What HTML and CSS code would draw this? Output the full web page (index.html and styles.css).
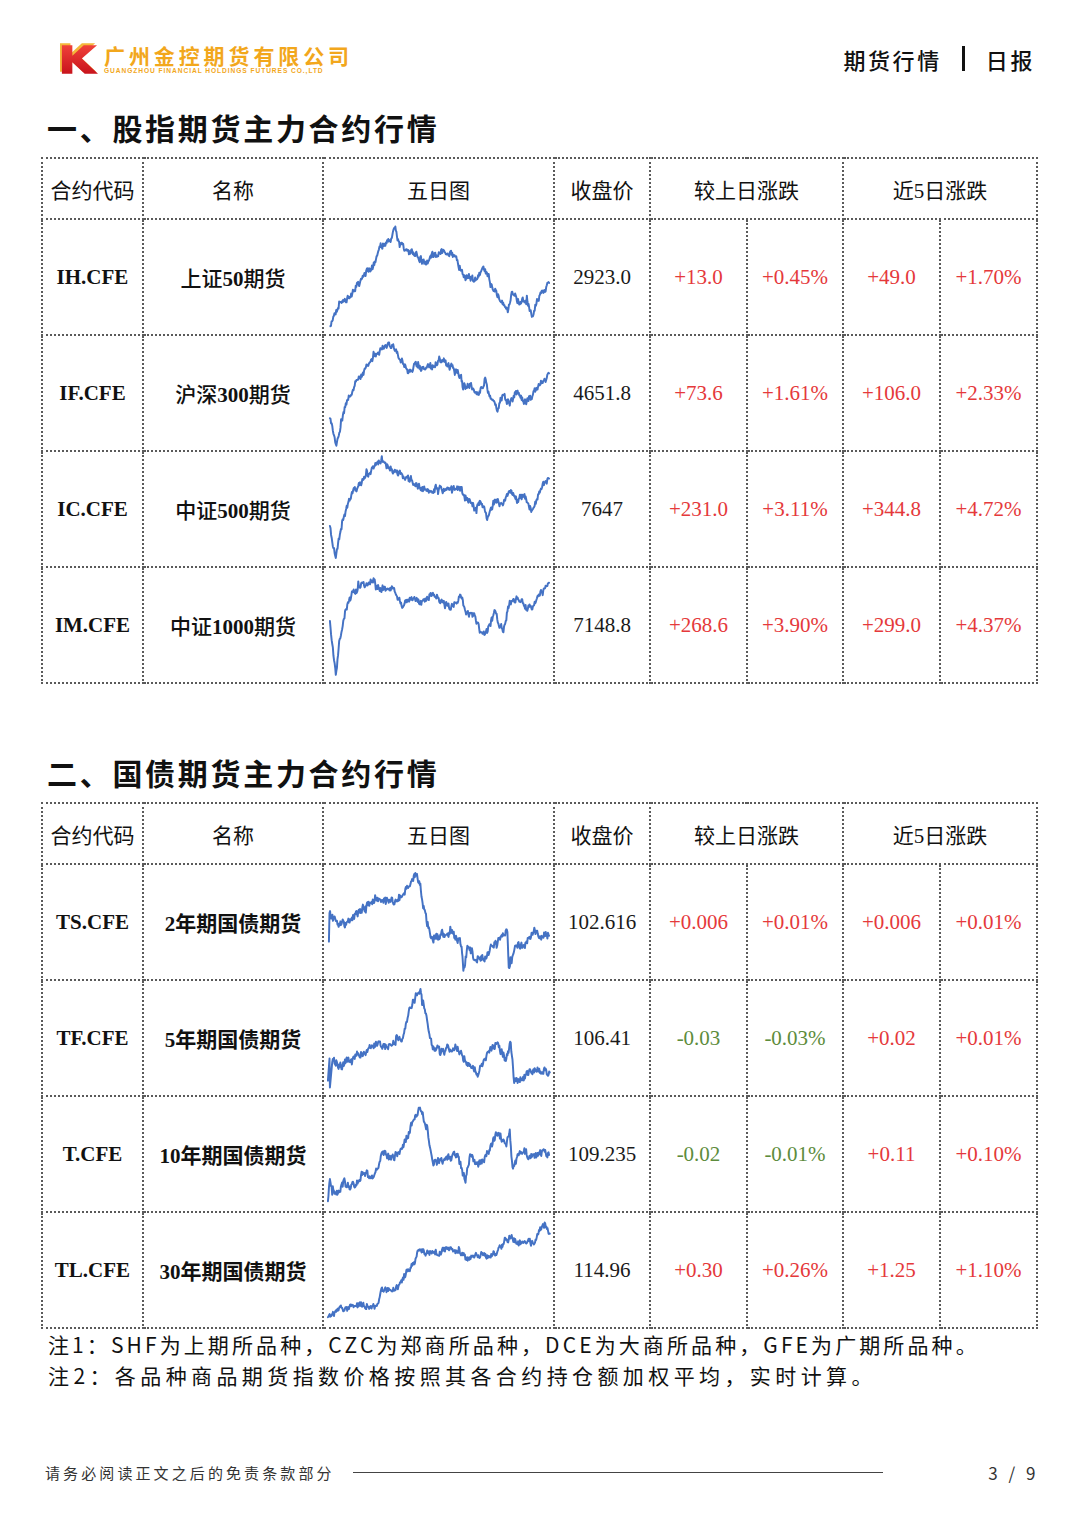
FILE: index.html
```html
<!DOCTYPE html>
<html lang="zh-CN">
<head>
<meta charset="utf-8">
<title>期货行情 日报</title>
<link rel="stylesheet" href="styles.css">
</head>
<body>
<div class="page">
  <header class="top">
    <div class="logo">
      <svg class="logo-k" viewBox="0 0 40 32" width="38" height="31">
        <defs>
          <linearGradient id="kred" x1="0" y1="0" x2="0" y2="1">
            <stop offset="0" stop-color="#f0413a"/>
            <stop offset="1" stop-color="#c8141c"/>
          </linearGradient>
        </defs>
        <path d="M0,0 H11 V11 L23,0 H37 L21,14 L38,30 H24 L11,18 V30 H0 Z" fill="#f4b73a"/>
        <path d="M2,2 H13 V13 L25,2 H39 L23,16 L40,32 H26 L13,20 V32 H2 Z" fill="url(#kred)"/>
      </svg>
      <div class="logo-text">
        <div class="logo-cn">广州金控期货有限公司</div>
        <div class="logo-en">GUANGZHOU FINANCIAL HOLDINGS FUTURES CO.,LTD</div>
      </div>
    </div>
    <div class="doc-type">
      <span>期货行情</span><span class="bar"></span><span>日报</span>
    </div>
  </header>

  <h2 class="sec-title">一、股指期货主力合约行情</h2>
  <table class="quote">
    <colgroup>
      <col class="c1"><col class="c2"><col class="c3"><col class="c4"><col class="c5"><col class="c6"><col class="c7"><col class="c8">
    </colgroup>
    <thead>
      <tr><th>合约代码</th><th>名称</th><th>五日图</th><th>收盘价</th><th colspan="2">较上日涨跌</th><th colspan="2">近5日涨跌</th></tr>
    </thead>
    <tbody>
      <tr>
        <td class="code">IH.CFE</td>
        <td class="name">上证<b>50</b>期货</td>
        <td class="chart"><svg class="spark" viewBox="0 0 231 116" data-amp="2.4" data-seed="11" data-pts="[[5.5,108],[15,84],[26,78],[36.6,60],[49,48],[56,30],[65,24],[71,10],[76,28],[86.6,34],[101,44],[111.6,38],[120.5,31],[133,38],[140,54],[154,61],[163,51],[172,71],[186.6,91],[190,73],[197,83],[206,83],[211.6,96],[218.7,76],[228,64]]"><path/></svg></td>
        <td class="num">2923.0</td>
        <td class="num up">+13.0</td><td class="num up">+0.45%</td>
        <td class="num up">+49.0</td><td class="num up">+1.70%</td>
      </tr>
      <tr>
        <td class="code">IF.CFE</td>
        <td class="name">沪深<b>300</b>期货</td>
        <td class="chart"><svg class="spark" viewBox="0 0 231 116" data-amp="2.4" data-seed="23" data-pts="[[5,85],[11,108],[17,85],[23,65],[38,40],[50,22],[58,15],[70,12],[83,35],[93,30],[103,33],[118,25],[128,30],[138,40],[140,50],[148,50],[156,60],[163,43],[168,60],[175,77],[181,60],[188,70],[196,55],[203,65],[211,60],[218,50],[228,38]]"><path/></svg></td>
        <td class="num">4651.8</td>
        <td class="num up">+73.6</td><td class="num up">+1.61%</td>
        <td class="num up">+106.0</td><td class="num up">+2.33%</td>
      </tr>
      <tr>
        <td class="code">IC.CFE</td>
        <td class="name">中证<b>500</b>期货</td>
        <td class="chart"><svg class="spark" viewBox="0 0 231 116" data-amp="2.4" data-seed="37" data-pts="[[5,74],[11,108],[18,69],[28,44],[38,27],[50,14],[56,11],[68,17],[78,21],[88,29],[98,35],[108,39],[118,34],[128,39],[138,34],[143,44],[153,59],[158,49],[165,69],[173,49],[181,54],[188,39],[196,49],[203,42],[211,59],[218,39],[228,27]]"><path/></svg></td>
        <td class="num">7647</td>
        <td class="num up">+231.0</td><td class="num up">+3.11%</td>
        <td class="num up">+344.8</td><td class="num up">+4.72%</td>
      </tr>
      <tr>
        <td class="code">IM.CFE</td>
        <td class="name">中证<b>1000</b>期货</td>
        <td class="chart"><svg class="spark" viewBox="0 0 231 116" data-amp="2.4" data-seed="41" data-pts="[[5,53],[11,110],[15,73],[21,43],[28,23],[38,16],[50,12],[58,23],[68,18],[78,38],[88,28],[98,38],[108,28],[118,33],[128,43],[138,28],[143,43],[153,48],[158,63],[165,66],[173,45],[181,65],[188,33],[196,30],[203,38],[211,43],[218,28],[228,15]]"><path/></svg></td>
        <td class="num">7148.8</td>
        <td class="num up">+268.6</td><td class="num up">+3.90%</td>
        <td class="num up">+299.0</td><td class="num up">+4.37%</td>
      </tr>
    </tbody>
  </table>

  <h2 class="sec-title sec-two">二、国债期货主力合约行情</h2>
  <table class="quote">
    <colgroup>
      <col class="c1"><col class="c2"><col class="c3"><col class="c4"><col class="c5"><col class="c6"><col class="c7"><col class="c8">
    </colgroup>
    <thead>
      <tr><th>合约代码</th><th>名称</th><th>五日图</th><th>收盘价</th><th colspan="2">较上日涨跌</th><th colspan="2">近5日涨跌</th></tr>
    </thead>
    <tbody>
      <tr>
        <td class="code">TS.CFE</td>
        <td class="name bond">2年期国债期货</td>
        <td class="chart"><svg class="spark" viewBox="0 0 231 116" data-amp="2.8" data-seed="53" data-pts="[[4,79],[4.6,48],[11,58],[25,59],[35.6,46],[52.8,36],[66.6,36],[77,33],[87,19],[92.5,10],[97.6,26],[101,46],[108,76],[118,73],[128.7,68],[139,83],[140.8,108],[146,83],[153,99],[163,93],[173.5,76],[185.6,68],[187,104],[194,83],[204.6,79],[213,63],[221.8,71],[228,72]]"><path/></svg></td>
        <td class="num">102.616</td>
        <td class="num up">+0.006</td><td class="num up">+0.01%</td>
        <td class="num up">+0.006</td><td class="num up">+0.01%</td>
      </tr>
      <tr>
        <td class="code">TF.CFE</td>
        <td class="name bond">5年期国债期货</td>
        <td class="chart"><svg class="spark" viewBox="0 0 231 116" data-amp="2.8" data-seed="67" data-pts="[[3,100],[4.6,80],[5,108],[8,80],[15,87],[25,83],[39,73],[53,67],[66.6,62],[78.7,57],[87,27],[96.6,10],[101,27],[109.7,72],[122,70],[135.6,70],[144,87],[156,93],[166.6,73],[175,63],[184,80],[189,62],[192.5,102],[204.6,93],[218,90],[228.7,93]]"><path/></svg></td>
        <td class="num">106.41</td>
        <td class="num down">-0.03</td><td class="num down">-0.03%</td>
        <td class="num up">+0.02</td><td class="num up">+0.01%</td>
      </tr>
      <tr>
        <td class="code">T.CFE</td>
        <td class="name bond">10年期国债期货</td>
        <td class="chart"><svg class="spark" viewBox="0 0 231 116" data-amp="2.8" data-seed="79" data-pts="[[3,107],[5,84],[11.4,101],[18,91],[32,92],[39,77],[49,81],[58,57],[66.6,64],[78.7,54],[87,31],[96.6,11],[104.6,34],[109.7,67],[122,64],[135.6,62],[143,87],[147.6,57],[156,71],[166.6,57],[175,37],[184,47],[188,32],[190.8,71],[197.7,57],[211,61],[221.8,54],[228,59]]"><path/></svg></td>
        <td class="num">109.235</td>
        <td class="num down">-0.02</td><td class="num down">-0.01%</td>
        <td class="num up">+0.11</td><td class="num up">+0.10%</td>
      </tr>
      <tr>
        <td class="code">TL.CFE</td>
        <td class="name bond">30年期国债期货</td>
        <td class="chart"><svg class="spark" viewBox="0 0 231 116" data-amp="2.2" data-seed="97" data-pts="[[3,106],[11.4,101],[15,96],[32,96],[39,91],[51,95],[58,76],[66.6,78],[77,70],[84,61],[91,53],[96,40],[104.6,41],[115,43],[125,36],[135.6,40],[144,48],[156,43],[168,45],[176.6,35],[188.7,25],[197.7,31],[211.4,31],[216.6,21],[223.5,10],[228.7,21]]"><path/></svg></td>
        <td class="num">114.96</td>
        <td class="num up">+0.30</td><td class="num up">+0.26%</td>
        <td class="num up">+1.25</td><td class="num up">+1.10%</td>
      </tr>
    </tbody>
  </table>

  <div class="notes">
    <p class="note1">注1：SHF为上期所品种，CZC为郑商所品种，DCE为大商所品种，GFE为广期所品种。</p>
    <p class="note2">注2：各品种商品期货指数价格按照其各合约持仓额加权平均，实时计算。</p>
  </div>

  <footer class="footer">
    <span class="disclaimer">请务必阅读正文之后的免责条款部分</span>
    <span class="rule"></span>
    <span class="pageno">3 / 9</span>
  </footer>
</div>
<script src="script.js"></script>
</body>
</html>
```

FILE: styles.css
```css
html, body {
  margin: 0;
  padding: 0;
  background: #ffffff;
}
body {
  width: 1080px;
  font-family: "Liberation Serif", "Noto Sans CJK SC", serif;
  color: #111;
}
.page {
  width: 1080px;
  padding-top: 43px;
  box-sizing: border-box;
}

/* header */
.top {
  display: flex;
  justify-content: space-between;
  align-items: center;
  height: 31px;
  padding: 0 45px 0 60px;
}
.logo {
  display: flex;
  align-items: flex-start;
  height: 31px;
}
.logo-k {
  display: block;
  flex: none;
}
.logo-text {
  margin-left: 6px;
  margin-top: 1px;
}
.logo-cn {
  font-family: "Noto Sans CJK SC", sans-serif;
  font-weight: 700;
  font-size: 21px;
  line-height: 22px;
  letter-spacing: 3.9px;
  color: #f2a71c;
}
.logo-en {
  font-family: "Liberation Sans", "DejaVu Sans", sans-serif;
  font-weight: 700;
  font-size: 6.6px;
  line-height: 7px;
  letter-spacing: 0.95px;
  color: #f2a71c;
  margin-top: 1px;
  white-space: nowrap;
}
.doc-type {
  display: flex;
  align-items: center;
  font-family: "Noto Sans CJK SC", sans-serif;
  font-weight: 500;
  font-size: 22px;
  letter-spacing: 2.6px;
  color: #111;
}
.doc-type .bar {
  display: inline-block;
  width: 3px;
  height: 25px;
  background: #111;
  margin: 0 21px 0 20px;
}

/* section titles */
.sec-title {
  margin: 33px 0 10px 0;
  padding-left: 47px;
  font-family: "Noto Sans CJK SC", sans-serif;
  font-weight: 700;
  font-size: 30px;
  line-height: 40px;
  letter-spacing: 2.7px;
  color: #111;
}
.sec-title.sec-two {
  margin-top: 68px;
  margin-bottom: 10px;
}

/* tables */
.quote {
  margin-left: 41px;
  width: 995px;
  table-layout: fixed;
  border-collapse: collapse;
}
.quote col.c1 { width: 101px; }
.quote col.c2 { width: 180px; }
.quote col.c3 { width: 231px; }
.quote col.c4 { width: 96px; }
.quote col.c5 { width: 97px; }
.quote col.c6 { width: 96px; }
.quote col.c7 { width: 97px; }
.quote col.c8 { width: 97px; }
.quote th, .quote td {
  border: 2px dotted #5a5a5a;
  padding: 0;
  text-align: center;
  vertical-align: middle;
}
.quote thead tr { height: 61px; }
.quote tbody tr { height: 116px; }
.quote th {
  font-family: "Liberation Serif", "Noto Sans CJK SC", serif;
  font-weight: 400;
  font-size: 21px;
  color: #111;
}
.quote td.code {
  font-family: "Liberation Serif", serif;
  font-weight: 700;
  font-size: 21px;
}
.quote td.name {
  font-family: "Liberation Serif", "Noto Sans CJK SC", serif;
  font-weight: 500;
  font-size: 21px;
}
.quote td.name b { font-weight: 700; }
.quote td.name.bond { font-weight: 700; }
.quote td.num {
  font-family: "Liberation Serif", serif;
  font-size: 21px;
  color: #1a1a1a;
}
.quote td.num.up { color: #e5393b; }
.quote td.num.down { color: #5d8c3c; }
.quote td.chart { overflow: hidden; }
.spark {
  display: block;
  width: 229px;
  height: 114px;
  overflow: hidden;
}
.spark path {
  fill: none;
  stroke: #4472c4;
  stroke-width: 2;
  stroke-linejoin: round;
  stroke-linecap: round;
}

/* notes */
.notes {
  margin-top: 0;
  padding-left: 48px;
  font-family: "Noto Sans CJK SC", sans-serif;
  font-size: 21px;
  color: #111;
}
.notes p {
  margin: 0;
  line-height: 31px;
  white-space: nowrap;
}
.notes .note1 { letter-spacing: 3.1px; }
.notes .note2 { letter-spacing: 4.4px; }

/* footer */
.footer {
  display: flex;
  align-items: center;
  margin-top: 66px;
  height: 30px;
  padding: 0 44px 0 45px;
  font-family: "Noto Sans CJK SC", sans-serif;
  color: #333;
}
.disclaimer {
  font-size: 15px;
  letter-spacing: 3.1px;
  white-space: nowrap;
}
.rule {
  flex: none;
  width: 530px;
  height: 0;
  border-top: 1px solid #444;
  margin-left: 18px;
}
.pageno {
  margin-left: auto;
  font-size: 17px;
  letter-spacing: 3.5px;
  margin-right: -3px;
  white-space: pre;
}
```

FILE: script.js
```js
(function () {
  function rng(seed) {
    return function () {
      seed |= 0;
      seed = (seed + 0x6d2b79f5) | 0;
      var t = Math.imul(seed ^ (seed >>> 15), 1 | seed);
      t = (t + Math.imul(t ^ (t >>> 7), 61 | t)) ^ t;
      return ((t ^ (t >>> 14)) >>> 0) / 4294967296;
    };
  }
  var charts = document.querySelectorAll('svg.spark');
  for (var c = 0; c < charts.length; c++) {
    var svg = charts[c];
    var pts = JSON.parse(svg.getAttribute('data-pts'));
    var amp = parseFloat(svg.getAttribute('data-amp') || '2.5');
    var rand = rng(parseInt(svg.getAttribute('data-seed') || '7', 10));
    var fast = 0, slow = 0;
    var d = '';
    for (var k = 0; k < pts.length - 1; k++) {
      var a = pts[k], b = pts[k + 1];
      var dx = b[0] - a[0];
      var steps = Math.max(1, Math.ceil(Math.abs(dx) / 0.6));
      for (var s = 0; s < steps; s++) {
        var t = s / steps;
        var x = a[0] + dx * t;
        var y = a[1] + (b[1] - a[1]) * t;
        fast = fast * 0.35 + (rand() - 0.5) * amp * 2.6;
        slow = slow * 0.93 + (rand() - 0.5) * amp * 0.7;
        if (rand() < 0.04) fast += (rand() - 0.5) * amp * 4;
        var damp = (s === 0) ? 0.4 : 1;
        var yy = y + (fast + slow) * damp;
        yy = Math.max(2, Math.min(112, yy));
        d += (d ? 'L' : 'M') + x.toFixed(2) + ',' + yy.toFixed(2);
      }
    }
    var last = pts[pts.length - 1];
    d += 'L' + last[0].toFixed(2) + ',' + last[1].toFixed(2);
    svg.querySelector('path').setAttribute('d', d);
  }
})();
```
